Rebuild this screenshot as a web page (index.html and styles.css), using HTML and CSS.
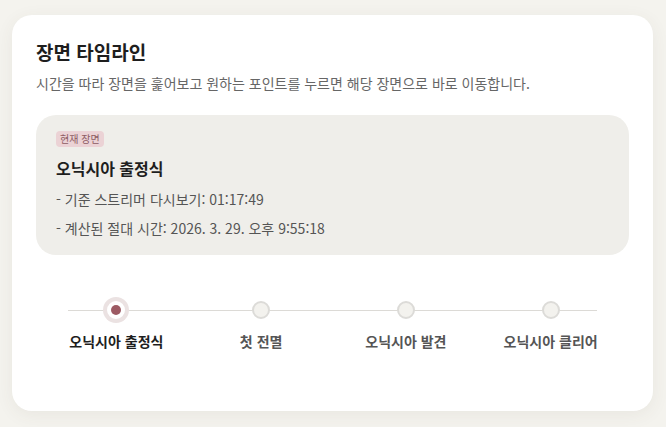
FILE: index.html
```html
<!DOCTYPE html>
<html lang="ko">
<head>
    <meta charset="UTF-8">
    <meta name="viewport" content="width=device-width, initial-scale=1.0">
    <title>장면 타임라인</title>
    <link rel="stylesheet" href="styles.css">
</head>
<body>
    <div class="card">
        <h2 class="card-title">장면 타임라인</h2>
        <p class="card-desc">시간을 따라 장면을 훑어보고 원하는 포인트를 누르면 해당 장면으로 바로 이동합니다.</p>

        <!-- 현재 장면 정보 -->
        <div class="current-scene">
            <span class="badge">현재 장면</span>
            <div class="scene-name">오닉시아 출정식</div>
            <div class="scene-line">- 기준 스트리머 다시보기: 01:17:49</div>
            <div class="scene-line">- 계산된 절대 시간: 2026. 3. 29. 오후 9:55:18</div>
        </div>

        <!-- 타임라인 -->
        <div class="timeline">
            <div class="timeline-track"></div>
            <button class="point active">
                <span class="dot"></span>
                <span class="point-label">오닉시아 출정식</span>
            </button>
            <button class="point">
                <span class="dot"></span>
                <span class="point-label">첫 전멸</span>
            </button>
            <button class="point">
                <span class="dot"></span>
                <span class="point-label">오닉시아 발견</span>
            </button>
            <button class="point">
                <span class="dot"></span>
                <span class="point-label">오닉시아 클리어</span>
            </button>
        </div>
    </div>
</body>
</html>
```

FILE: styles.css
```css
body {
    font-family: "Noto Sans CJK KR", "Noto Sans", sans-serif;
    margin: 0;
    padding: 15px 13px 17px 12px;
    background: #f4f3ee;
}

.card {
    background: #fff;
    border-radius: 20px;
    padding: 24px 24px 60px;
    box-shadow: 0 4px 18px rgba(80, 70, 50, 0.07);
}

.card-title {
    font-size: 19px;
    font-weight: 700;
    color: #1e1e1e;
    margin: 0;
    line-height: 26px;
}

.card-desc {
    font-size: 14px;
    color: #666;
    margin: 8px 0 0;
    line-height: 20px;
}

.current-scene {
    background: #efeeea;
    border-radius: 20px;
    margin-top: 22px;
    padding: 16px 20px 17px;
}

.badge {
    display: block;
    width: fit-content;
    background: #ebd2d5;
    color: #8d5b63;
    font-size: 10px;
    line-height: 16px;
    padding: 0 4px;
    border-radius: 4px;
}

.scene-name {
    font-size: 16px;
    font-weight: 700;
    color: #1e1e1e;
    margin-top: 10px;
    line-height: 22px;
}

.scene-line {
    font-size: 14px;
    color: #555;
    line-height: 20px;
    margin-top: 9px;
}

.scene-name + .scene-line {
    margin-top: 10px;
}

.timeline {
    position: relative;
    display: grid;
    grid-template-columns: repeat(4, 1fr);
    margin: 45px 6px 0 8px;
}

.timeline-track {
    position: absolute;
    left: 24px;
    right: 26px;
    top: 10px;
    height: 1px;
    background: #dcdad6;
}

.point {
    position: relative;
    display: flex;
    flex-direction: column;
    align-items: center;
    background: none;
    border: none;
    padding: 0;
    cursor: pointer;
    font-family: inherit;
}

.dot {
    width: 18px;
    height: 18px;
    box-sizing: border-box;
    border-radius: 50%;
    border: 2px solid #dcdbd8;
    background: #f3f2ee;
    margin-top: 1px;
}

.point.active .dot {
    background: #fff;
    border: 4px solid #fff;
    box-shadow: 0 0 0 4px #ebe2e2;
    position: relative;
}

.point.active .dot::after {
    content: "";
    position: absolute;
    inset: 0;
    border-radius: 50%;
    background: #9d5a63;
}

.point-label {
    font-size: 14px;
    font-weight: 700;
    color: #555;
    margin-top: 12px;
    line-height: 20px;
}

.point.active .point-label {
    color: #1e1e1e;
}
```
